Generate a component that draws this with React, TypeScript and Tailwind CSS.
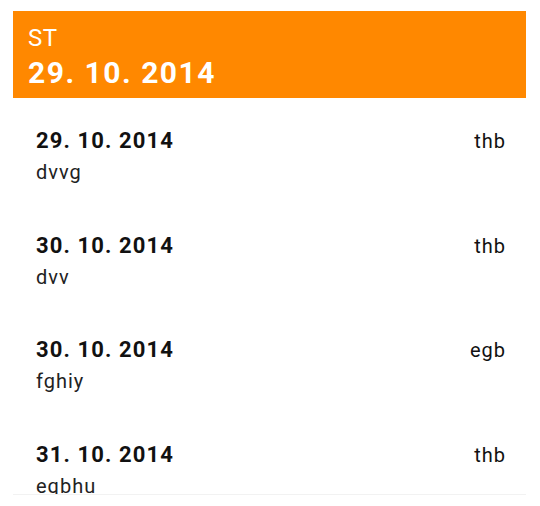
import React from "react";

interface Entry {
  date: string;
  note: string;
  tag: string;
}

const entries: Entry[] = [
  { date: "29. 10. 2014", note: "dvvg", tag: "thb" },
  { date: "30. 10. 2014", note: "dvv", tag: "thb" },
  { date: "30. 10. 2014", note: "fghiy", tag: "egb" },
  { date: "31. 10. 2014", note: "eqbhu", tag: "thb" },
];

export default function App() {
  return (
    <div
      className="w-[540px] h-[506px] bg-white pt-[11px] px-[13px] overflow-hidden"
      style={{ fontFamily: "Roboto, 'Noto Sans', sans-serif" }}
    >
      <div className="w-[513px] h-[484px] flex flex-col overflow-hidden border-b border-[#f2f2f2]">
        {/* Header */}
        <div className="bg-[#ff8800] text-white px-[15px] pt-[13px] pb-[8px] shrink-0">
          <div className="text-[24px] leading-[28px] tracking-[0.02em]">ST</div>
          <div className="text-[30px] leading-[34px] font-bold mt-[4px] tracking-[0.05em]">
            29. 10. 2014
          </div>
        </div>

        {/* Entries */}
        <div className="flex flex-col">
          {entries.map((entry, i) => (
            <div
              key={i}
              className="h-[104.67px] shrink-0 pl-[23px] pr-[21px] pt-[30px]"
            >
              <div className="flex items-baseline justify-between">
                <span className="text-[22px] leading-[26px] font-bold text-[#111] tracking-[0.05em]">
                  {entry.date}
                </span>
                <span className="text-[20px] leading-[26px] text-[#111] tracking-[0.05em] -mr-[1px]">
                  {entry.tag}
                </span>
              </div>
              <div className="text-[20px] leading-[24px] mt-[6px] text-[#222] tracking-[0.05em]">
                {entry.note}
              </div>
            </div>
          ))}
        </div>
      </div>
    </div>
  );
}
